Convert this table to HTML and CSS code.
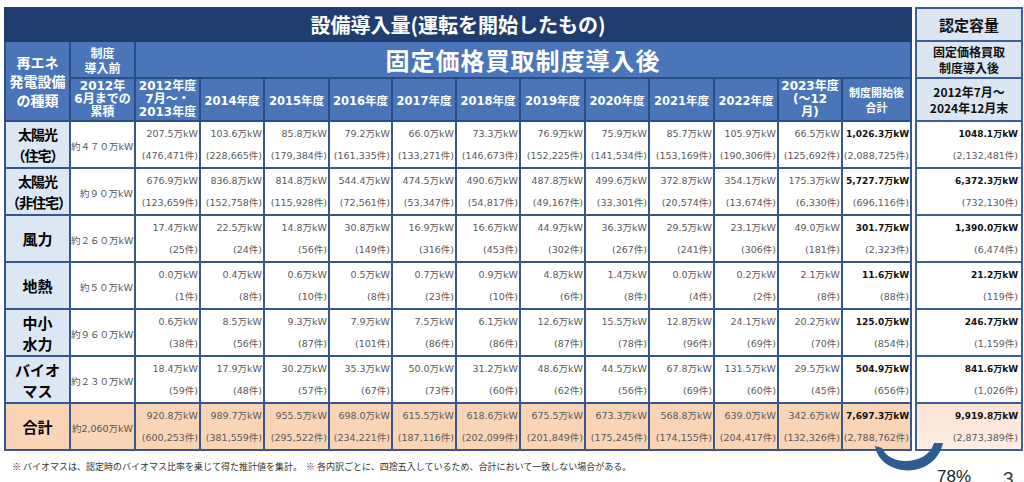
FILE: index.html
```html
<!DOCTYPE html>
<html lang="ja">
<head>
<meta charset="utf-8">
<title>設備導入量</title>
<link rel="stylesheet" href="styles.css">
</head>
<body>
<div class="slide">
  <div class="tables">
    <table class="main">
      <colgroup>
        <col class="w65"><col class="w65"><col class="w65"><col class="w64"><col class="w65"><col class="w63"><col class="w64"><col class="w64"><col class="w65"><col class="w64"><col class="w65"><col class="w64"><col class="w64"><col class="w69">
      </colgroup>
      <thead>
        <tr class="r1"><th colspan="14" class="title">設備導入量(運転を開始したもの)</th></tr>
        <tr class="r2">
          <th rowspan="2" class="kind">再エネ<br>発電設備<br>の種類</th>
          <th class="pre">制度<br>導入前</th>
          <th colspan="12" class="fit">固定価格買取制度導入後</th>
        </tr>
        <tr class="r3">
          <th class="sm">2012年<br>6月までの<br>累積</th>
          <th class="sm">2012年度<br>7月～・<br>2013年度</th>
          <th class="yr">2014年度</th>
          <th class="yr">2015年度</th>
          <th class="yr">2016年度</th>
          <th class="yr">2017年度</th>
          <th class="yr">2018年度</th>
          <th class="yr">2019年度</th>
          <th class="yr">2020年度</th>
          <th class="yr">2021年度</th>
          <th class="yr">2022年度</th>
          <th class="sm">2023年度<br>(～12<br>月)</th>
          <th class="xs">制度開始後<br>合計</th>
        </tr>
      </thead>
      <tbody>
        <tr>
          <th class="lab tight">太陽光<br>（住宅）</th><td class="pv">約４７０万kW</td>
          <td><div class="v">207.5万kW</div><div class="n">(476,471件)</div></td>
          <td><div class="v">103.6万kW</div><div class="n">(228,665件)</div></td>
          <td><div class="v">85.8万kW</div><div class="n">(179,384件)</div></td>
          <td><div class="v">79.2万kW</div><div class="n">(161,335件)</div></td>
          <td><div class="v">66.0万kW</div><div class="n">(133,271件)</div></td>
          <td><div class="v">73.3万kW</div><div class="n">(146,673件)</div></td>
          <td><div class="v">76.9万kW</div><div class="n">(152,225件)</div></td>
          <td><div class="v">75.9万kW</div><div class="n">(141,534件)</div></td>
          <td><div class="v">85.7万kW</div><div class="n">(153,169件)</div></td>
          <td><div class="v">105.9万kW</div><div class="n">(190,306件)</div></td>
          <td><div class="v">66.5万kW</div><div class="n">(125,692件)</div></td>
          <td><div class="v b">1,026.3万kW</div><div class="n">(2,088,725件)</div></td>
        </tr>
        <tr>
          <th class="lab tight">太陽光<br>（非住宅）</th><td class="pv">約９０万kW</td>
          <td><div class="v">676.9万kW</div><div class="n">(123,659件)</div></td>
          <td><div class="v">836.8万kW</div><div class="n">(152,758件)</div></td>
          <td><div class="v">814.8万kW</div><div class="n">(115,928件)</div></td>
          <td><div class="v">544.4万kW</div><div class="n">(72,561件)</div></td>
          <td><div class="v">474.5万kW</div><div class="n">(53,347件)</div></td>
          <td><div class="v">490.6万kW</div><div class="n">(54,817件)</div></td>
          <td><div class="v">487.8万kW</div><div class="n">(49,167件)</div></td>
          <td><div class="v">499.6万kW</div><div class="n">(33,301件)</div></td>
          <td><div class="v">372.8万kW</div><div class="n">(20,574件)</div></td>
          <td><div class="v">354.1万kW</div><div class="n">(13,674件)</div></td>
          <td><div class="v">175.3万kW</div><div class="n">(6,330件)</div></td>
          <td><div class="v b">5,727.7万kW</div><div class="n">(696,116件)</div></td>
        </tr>
        <tr>
          <th class="lab">風力</th><td class="pv">約２６０万kW</td>
          <td><div class="v">17.4万kW</div><div class="n">(25件)</div></td>
          <td><div class="v">22.5万kW</div><div class="n">(24件)</div></td>
          <td><div class="v">14.8万kW</div><div class="n">(56件)</div></td>
          <td><div class="v">30.8万kW</div><div class="n">(149件)</div></td>
          <td><div class="v">16.9万kW</div><div class="n">(316件)</div></td>
          <td><div class="v">16.6万kW</div><div class="n">(453件)</div></td>
          <td><div class="v">44.9万kW</div><div class="n">(302件)</div></td>
          <td><div class="v">36.3万kW</div><div class="n">(267件)</div></td>
          <td><div class="v">29.5万kW</div><div class="n">(241件)</div></td>
          <td><div class="v">23.1万kW</div><div class="n">(306件)</div></td>
          <td><div class="v">49.0万kW</div><div class="n">(181件)</div></td>
          <td><div class="v b">301.7万kW</div><div class="n">(2,323件)</div></td>
        </tr>
        <tr>
          <th class="lab">地熱</th><td class="pv">約５０万kW</td>
          <td><div class="v">0.0万kW</div><div class="n">(1件)</div></td>
          <td><div class="v">0.4万kW</div><div class="n">(8件)</div></td>
          <td><div class="v">0.6万kW</div><div class="n">(10件)</div></td>
          <td><div class="v">0.5万kW</div><div class="n">(8件)</div></td>
          <td><div class="v">0.7万kW</div><div class="n">(23件)</div></td>
          <td><div class="v">0.9万kW</div><div class="n">(10件)</div></td>
          <td><div class="v">4.8万kW</div><div class="n">(6件)</div></td>
          <td><div class="v">1.4万kW</div><div class="n">(8件)</div></td>
          <td><div class="v">0.0万kW</div><div class="n">(4件)</div></td>
          <td><div class="v">0.2万kW</div><div class="n">(2件)</div></td>
          <td><div class="v">2.1万kW</div><div class="n">(8件)</div></td>
          <td><div class="v b">11.6万kW</div><div class="n">(88件)</div></td>
        </tr>
        <tr>
          <th class="lab">中小<br>水力</th><td class="pv">約９６０万kW</td>
          <td><div class="v">0.6万kW</div><div class="n">(38件)</div></td>
          <td><div class="v">8.5万kW</div><div class="n">(56件)</div></td>
          <td><div class="v">9.3万kW</div><div class="n">(87件)</div></td>
          <td><div class="v">7.9万kW</div><div class="n">(101件)</div></td>
          <td><div class="v">7.5万kW</div><div class="n">(86件)</div></td>
          <td><div class="v">6.1万kW</div><div class="n">(86件)</div></td>
          <td><div class="v">12.6万kW</div><div class="n">(87件)</div></td>
          <td><div class="v">15.5万kW</div><div class="n">(78件)</div></td>
          <td><div class="v">12.8万kW</div><div class="n">(96件)</div></td>
          <td><div class="v">24.1万kW</div><div class="n">(69件)</div></td>
          <td><div class="v">20.2万kW</div><div class="n">(70件)</div></td>
          <td><div class="v b">125.0万kW</div><div class="n">(854件)</div></td>
        </tr>
        <tr>
          <th class="lab">バイオ<br>マス</th><td class="pv">約２３０万kW</td>
          <td><div class="v">18.4万kW</div><div class="n">(59件)</div></td>
          <td><div class="v">17.9万kW</div><div class="n">(48件)</div></td>
          <td><div class="v">30.2万kW</div><div class="n">(57件)</div></td>
          <td><div class="v">35.3万kW</div><div class="n">(67件)</div></td>
          <td><div class="v">50.0万kW</div><div class="n">(73件)</div></td>
          <td><div class="v">31.2万kW</div><div class="n">(60件)</div></td>
          <td><div class="v">48.6万kW</div><div class="n">(62件)</div></td>
          <td><div class="v">44.5万kW</div><div class="n">(56件)</div></td>
          <td><div class="v">67.8万kW</div><div class="n">(69件)</div></td>
          <td><div class="v">131.5万kW</div><div class="n">(60件)</div></td>
          <td><div class="v">29.5万kW</div><div class="n">(45件)</div></td>
          <td><div class="v b">504.9万kW</div><div class="n">(656件)</div></td>
        </tr>
        <tr class="total">
          <th class="lab">合計</th><td class="pv">約2,060万kW</td>
          <td><div class="v">920.8万kW</div><div class="n">(600,253件)</div></td>
          <td><div class="v">989.7万kW</div><div class="n">(381,559件)</div></td>
          <td><div class="v">955.5万kW</div><div class="n">(295,522件)</div></td>
          <td><div class="v">698.0万kW</div><div class="n">(234,221件)</div></td>
          <td><div class="v">615.5万kW</div><div class="n">(187,116件)</div></td>
          <td><div class="v">618.6万kW</div><div class="n">(202,099件)</div></td>
          <td><div class="v">675.5万kW</div><div class="n">(201,849件)</div></td>
          <td><div class="v">673.3万kW</div><div class="n">(175,245件)</div></td>
          <td><div class="v">568.8万kW</div><div class="n">(174,155件)</div></td>
          <td><div class="v">639.0万kW</div><div class="n">(204,417件)</div></td>
          <td><div class="v">342.6万kW</div><div class="n">(132,326件)</div></td>
          <td><div class="v b">7,697.3万kW</div><div class="n">(2,788,762件)</div></td>
        </tr>
      </tbody>
    </table>

    <table class="side">
      <thead>
        <tr class="r1"><th class="cap">認定容量</th></tr>
        <tr class="r2"><th class="sub">固定価格買取<br>制度導入後</th></tr>
        <tr class="r3"><th class="sub">2012年7月～<br>2024年12月末</th></tr>
      </thead>
      <tbody>
        <tr><td><div class="v b">1048.1万kW</div><div class="n">(2,132,481件)</div></td></tr>
        <tr><td><div class="v b">6,372.3万kW</div><div class="n">(732,130件)</div></td></tr>
        <tr><td><div class="v b">1,390.0万kW</div><div class="n">(6,474件)</div></td></tr>
        <tr><td><div class="v b">21.2万kW</div><div class="n">(119件)</div></td></tr>
        <tr><td><div class="v b">246.7万kW</div><div class="n">(1,159件)</div></td></tr>
        <tr><td><div class="v b">841.6万kW</div><div class="n">(1,026件)</div></td></tr>
        <tr class="total"><td><div class="v b">9,919.8万kW</div><div class="n">(2,873,389件)</div></td></tr>
      </tbody>
    </table>
  </div>

  <p class="note">※ バイオマスは、認定時のバイオマス比率を乗じて得た推計値を集計。&nbsp; ※ 各内訳ごとに、四捨五入しているため、合計において一致しない場合がある。</p>

  <svg class="arrow" width="80" height="40" viewBox="0 0 80 40" aria-hidden="true">
    <path d="M3 5 C 8 36, 62 40, 71 2 L 62 2 C 56 24, 18 26, 10 7 Z" fill="#2d5c93"/>
  </svg>
  <span class="pct">78%</span>
  <span class="page">3</span>
</div>
</body>
</html>
```

FILE: styles.css
```css
html, body {
  margin: 0;
  padding: 0;
  background: #ffffff;
}

body {
  font-family: "DejaVu Sans", "Noto Sans CJK JP", sans-serif;
  color: #333;
}

.slide {
  position: relative;
  width: 1024px;
  height: 482px;
  overflow: hidden;
  box-sizing: border-box;
  padding: 7px 0 0 4px;
}

.tables {
  display: flex;
  align-items: flex-start;
  gap: 3px;
}

table {
  border-collapse: collapse;
  table-layout: fixed;
}

.main { width: 906px; }
.side { width: 108px; }

col.w63 { width: 63px; }
col.w64 { width: 64px; }
col.w65 { width: 65px; }
col.w69 { width: 69px; }

th, td {
  padding: 0;
  overflow: visible;
  white-space: nowrap;
}

/* header rows */
.r1 { height: 33px; }
.r2 { height: 37px; }
.r3 { height: 43px; }

.main thead th {
  background: #4a76b9;
  color: #ffffff;
  border: 2px solid #2c4e86;
  font-weight: bold;
  text-align: center;
  vertical-align: middle;
  font-family: "Noto Sans CJK JP", sans-serif;
}

.main thead th.title {
  background: #1f3e6f;
  border-color: #1f3e6f;
  font-size: 20px;
  line-height: 24px;
}

.main thead th.fit {
  font-size: 24px;
  letter-spacing: 1px;
  line-height: 30px;
}

.main thead th.kind {
  font-size: 14px;
  line-height: 19px;
}

.main thead th.pre {
  font-size: 12px;
  line-height: 15px;
}

.main thead th.sm {
  font-size: 12px;
  line-height: 13px;
  font-family: "DejaVu Sans", "Noto Sans CJK JP", sans-serif;
}

.main thead th.yr {
  font-size: 11.5px;
  font-family: "DejaVu Sans", "Noto Sans CJK JP", sans-serif;
}

.main thead th.xs {
  font-size: 11px;
  line-height: 15px;
}

/* side table header */
.side thead th {
  background: #dbe6f2;
  color: #111;
  border: 2px solid #3d5f97;
  font-weight: bold;
  text-align: center;
  vertical-align: middle;
  font-family: "Noto Sans CJK JP", sans-serif;
}

.side th.cap {
  font-size: 15px;
}

.side th.sub {
  font-size: 12px;
  line-height: 16px;
}

/* body */
tbody tr { height: 45px; }

tbody td {
  border: 2px solid #35568f;
  background: #ffffff;
  text-align: right;
  vertical-align: top;
  padding: 1px 1px 0 0;
  font-size: 9.5px;
  color: #5a5a5a;
}

tbody td .v,
tbody td .n {
  line-height: 22px;
}

tbody td .b {
  font-weight: bold;
  color: #111;
  font-size: 9px;
}

tbody th.lab {
  background: #dbe7f4;
  border: 2px solid #35568f;
  font-family: "Noto Sans CJK JP", sans-serif;
  font-weight: bold;
  font-size: 15px;
  line-height: 21px;
  color: #000;
  text-align: center;
  vertical-align: middle;
}

tbody th.lab.tight {
  font-size: 14px;
  letter-spacing: -1px;
}

tbody td.pv {
  vertical-align: middle;
  padding: 2px 1px 0 0;
  font-size: 9.5px;
  color: #555;
}

tbody tr.total th.lab,
tbody tr.total td {
  background: #f9d4b6;
}

.side tbody td {
  border-color: #3d5f97;
  padding-right: 3px;
}

.side tbody tr.total td {
  background: linear-gradient(180deg, #fce4d3 0%, #fdede2 100%);
}

/* footnote */
.note {
  margin: 10px 0 0 8px;
  font-family: "Noto Sans CJK JP", sans-serif;
  font-size: 9px;
  line-height: 12px;
  color: #333;
  white-space: nowrap;
}

/* annotation overlay */
.arrow {
  position: absolute;
  left: 872px;
  top: 441px;
}

.pct {
  position: absolute;
  left: 937px;
  top: 467px;
  font-family: "Liberation Sans", sans-serif;
  font-size: 17px;
  line-height: 20px;
  color: #222;
}

.page {
  position: absolute;
  left: 1003px;
  top: 468px;
  font-family: "Liberation Sans", sans-serif;
  font-size: 19px;
  line-height: 22px;
  color: #333;
}
```
